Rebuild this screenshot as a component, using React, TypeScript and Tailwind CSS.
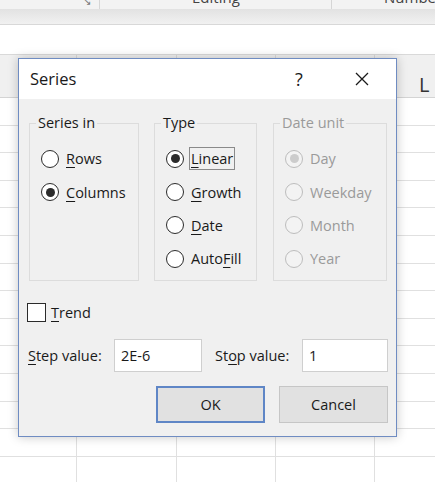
import React from "react";

const font = { fontFamily: '"Open Sans", "Noto Sans", sans-serif' };

interface RadioProps {
  label: string;
  hotkey: number;
  checked?: boolean;
  disabled?: boolean;
  focused?: boolean;
}

// label with one underlined access-key letter
function AccessLabel({ text, index }: { text: string; index: number }) {
  if (index < 0) return <>{text}</>;
  return (
    <>
      {text.slice(0, index)}
      <span className="underline underline-offset-[3px] decoration-[1px]">
        {text[index]}
      </span>
      {text.slice(index + 1)}
    </>
  );
}

function Radio({ label, hotkey, checked, disabled, focused }: RadioProps) {
  return (
    <div className="flex items-center h-[33.4px] gap-[5px]">
      <span
        className={
          "w-[18px] h-[18px] rounded-full border-[1.5px] flex items-center justify-center shrink-0 " +
          (disabled ? "border-[#bdbdbd] bg-[#f3f3f3]" : "border-[#2b2b2b] bg-white")
        }
      >
        {checked && (
          <span
            className={
              "w-[9px] h-[9px] rounded-full " +
              (disabled ? "bg-[#cccccc]" : "bg-[#2b2b2b]")
            }
          />
        )}
      </span>
      <span
        className={
          "px-[1px] leading-[21px] border " +
          (focused ? "border-[#8a8a8a]" : "border-transparent") +
          (disabled ? " text-[#9a9a9a]" : " text-[#1a1a1a]")
        }
      >
        <AccessLabel text={label} index={hotkey} />
      </span>
    </div>
  );
}

function Group({
  title,
  width,
  disabled,
  children,
}: {
  title: string;
  width: string;
  disabled?: boolean;
  children: React.ReactNode;
}) {
  return (
    <div className={"relative h-[158px] border border-[#dcdcdc] pl-[11px] pt-[18px] " + width}>
      <span
        className={
          "absolute -top-[12px] left-[6px] px-[2px] bg-[#f0f0f0] leading-[22px] " +
          (disabled ? "text-[#9a9a9a]" : "text-[#1a1a1a]")
        }
      >
        {title}
      </span>
      {children}
    </div>
  );
}

function SeriesDialog() {
  return (
    <div
      className="absolute left-[18px] top-[58px] w-[379px] h-[379px] border border-[#6f8cc2] bg-[#f0f0f0] shadow-[0_0_10px_rgba(0,0,0,0.22)] flex flex-col text-[14.5px]"
      style={font}
    >
      <div className="h-[40px] bg-white flex items-center pl-[11px] shrink-0">
        <span className="text-[16.5px] text-[#1a1a1a] flex-1">Series</span>
        <span className="text-[18px] text-[#1a1a1a] w-[20px] text-center mr-[46px]">?</span>
        <svg width="14" height="14" viewBox="0 0 14 14" className="mr-[27px]">
          <path d="M1 1 L13 13 M13 1 L1 13" stroke="#1a1a1a" strokeWidth="1.3" />
        </svg>
      </div>

      <div className="flex flex-col px-[8px] pt-[24px]">
        <div className="flex pl-[2px] gap-[15px]">
          <Group title="Series in" width="w-[110px]">
            <Radio label="Rows" hotkey={0} />
            <Radio label="Columns" hotkey={0} checked />
          </Group>
          <div className="flex gap-[16px]">
            <Group title="Type" width="w-[103px]">
              <Radio label="Linear" hotkey={0} checked focused />
              <Radio label="Growth" hotkey={0} />
              <Radio label="Date" hotkey={0} />
              <Radio label="AutoFill" hotkey={4} />
            </Group>
            <Group title="Date unit" width="w-[114px]" disabled>
              <Radio label="Day" hotkey={-1} checked disabled />
              <Radio label="Weekday" hotkey={-1} disabled />
              <Radio label="Month" hotkey={-1} disabled />
              <Radio label="Year" hotkey={-1} disabled />
            </Group>
          </div>
        </div>

        <div className="flex items-center gap-[5px] mt-[22px] h-[19px] text-[#1a1a1a]">
          <span className="w-[19px] h-[19px] border-[1.5px] border-[#2b2b2b] bg-white" />
          <span>
            <AccessLabel text="Trend" index={0} />
          </span>
        </div>

        <div className="flex items-center mt-[17px] h-[33px] text-[#1a1a1a]">
          <span className="w-[87px] pl-[1px]">
            <AccessLabel text="Step value:" index={0} />
          </span>
          <div className="w-[88px] h-[33px] bg-white border border-[#cfcfcf] flex items-center pl-[6px]">
            2E-6
          </div>
          <span className="w-[100px] pl-[13px]">
            <AccessLabel text="Stop value:" index={2} />
          </span>
          <div className="w-[86px] h-[33px] bg-white border border-[#cfcfcf] flex items-center pl-[6px]">
            1
          </div>
        </div>

        <div className="flex justify-end gap-[14px] mt-[14px] text-[#1a1a1a]">
          <button className="w-[109px] h-[37px] bg-[#e1e1e1] border-2 border-[#5f86c6]">
            OK
          </button>
          <button className="w-[109px] h-[37px] bg-[#e1e1e1] border border-[#c6c6c6]">
            Cancel
          </button>
        </div>
      </div>
    </div>
  );
}

// spreadsheet rows behind the dialog
function Sheet() {
  const rows = Array.from({ length: 14 });
  return (
    <div className="flex flex-col">
      {rows.map((_, i) => (
        <div
          key={i}
          className="grid grid-cols-[77px_100px_99px_99px_1fr] h-[27.6px] border-b border-[#e0e0e0] shrink-0"
        >
          <div className="border-r border-[#e0e0e0]" />
          <div className="border-r border-[#e0e0e0]" />
          <div className="border-r border-[#e0e0e0]" />
          <div className="border-r border-[#e0e0e0]" />
          <div />
        </div>
      ))}
    </div>
  );
}

export default function App() {
  return (
    <div className="relative w-[435px] h-[482px] overflow-hidden bg-white" style={font}>
      {/* ribbon tail */}
      <div className="h-[9px] bg-[#f3f3f3] relative flex overflow-hidden">
        <div className="w-[100px] border-r border-[#d6d6d6] relative">
          <span className="absolute right-[8px] -top-[6px] text-[10px] text-[#777]">↘</span>
        </div>
        <div className="w-[232px] border-r border-[#d6d6d6] relative">
          <span className="absolute left-[92px] -top-[14px] text-[15px] text-[#444]">Editing</span>
        </div>
        <div className="flex-1 relative">
          <span className="absolute left-[52px] -top-[14px] text-[15px] text-[#444]">Number</span>
        </div>
      </div>
      <div className="h-[16px] bg-gradient-to-b from-[#e2e2e2] to-[#f1f1f1] border-b border-[#d8d8d8]" />
      <div className="h-[30px] bg-white border-b border-[#d9d9d9]" />
      {/* column headers */}
      <div className="h-[43px] bg-[#f0f0f0] border-b border-[#d4d4d4] grid grid-cols-[77px_100px_99px_99px_1fr]">
        <div className="border-r border-[#dadada]" />
        <div className="border-r border-[#dadada]" />
        <div className="border-r border-[#dadada]" />
        <div className="border-r border-[#dadada]" />
        <div className="flex items-end pb-[2px] pl-[44px] text-[20px] leading-[20px] text-[#333]">L</div>
      </div>
      <Sheet />
      <SeriesDialog />
    </div>
  );
}
